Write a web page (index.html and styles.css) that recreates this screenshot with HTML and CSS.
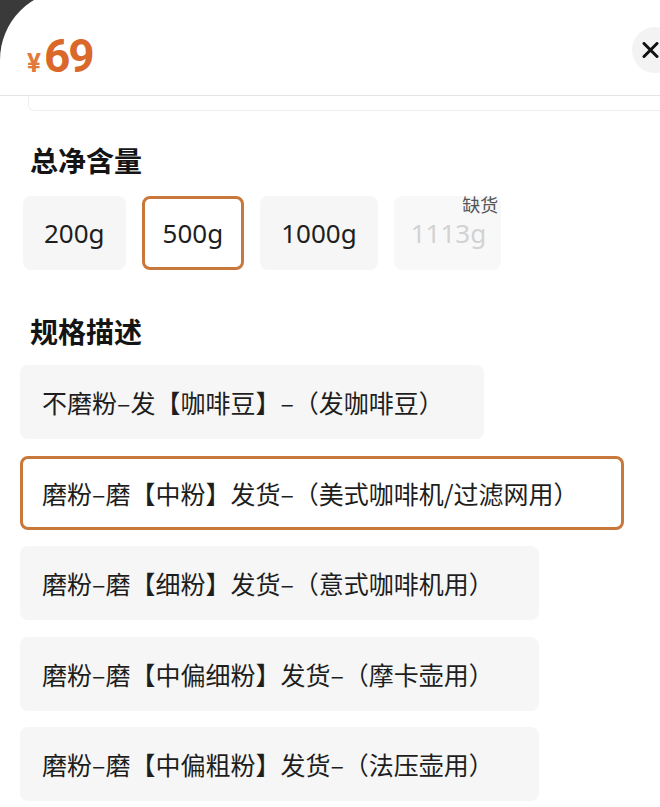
FILE: index.html
```html
<!DOCTYPE html>
<html lang="zh-CN">
<head>
<meta charset="utf-8">
<title>规格选择</title>
<link rel="stylesheet" href="styles.css">
</head>
<body>
<div class="sheet">
  <header class="header">
    <div class="price"><span class="yen">¥</span><span class="amount">69</span></div>
    <button class="close" aria-label="关闭">
      <svg width="17" height="16" viewBox="0 0 17 16"><path d="M2 1.5 L15 14.5 M15 1.5 L2 14.5" stroke="#111" stroke-width="3" stroke-linecap="round" fill="none"/></svg>
    </button>
  </header>
  <div class="peek"></div>
  <section class="group">
    <h2 class="title">总净含量</h2>
    <div class="sizes">
      <div class="size">200g</div>
      <div class="size selected">500g</div>
      <div class="size">1000g</div>
      <div class="size disabled">1113g<span class="badge">缺货</span></div>
    </div>
  </section>
  <section class="group group-spec">
    <h2 class="title">规格描述</h2>
    <div class="specs">
      <div class="spec">不磨粉–发【咖啡豆】–（发咖啡豆）</div>
      <div class="spec selected">磨粉–磨【中粉】发货–（美式咖啡机/过滤网用）</div>
      <div class="spec wide">磨粉–磨【细粉】发货–（意式咖啡机用）</div>
      <div class="spec wide">磨粉–磨【中偏细粉】发货–（摩卡壶用）</div>
      <div class="spec wide">磨粉–磨【中偏粗粉】发货–（法压壶用）</div>
    </div>
  </section>
</div>
</body>
</html>
```
FILE: styles.css
```css
html, body {
  margin: 0;
  padding: 0;
}
body {
  background: #3a3a3a;
  overflow: hidden;
  height: 807px;
  font-family: "Noto Sans", "Noto Sans CJK SC", sans-serif;
  color: #1e1e1e;
}
.sheet {
  background: #ffffff;
  margin-top: -10px;
  border-top-left-radius: 70px;
  height: 830px;
}
.header {
  display: flex;
  justify-content: space-between;
  align-items: flex-start;
  height: 106px;
  box-sizing: border-box;
  padding: 37px 0 0 27px;
  border-bottom: 1.5px solid #e4e4e4;
}
.price {
  display: flex;
  align-items: baseline;
  margin-top: 6px;
  color: #d9682a;
  font-family: Roboto, "Noto Sans", sans-serif;
  font-weight: 700;
  line-height: 46px;
}
.yen {
  font-size: 26px;
  color: #e17a3a;
  margin-right: 3px;
}
.amount {
  font-size: 46px;
  letter-spacing: -2px;
}
.close {
  width: 46px;
  height: 46px;
  margin-right: -18px;
  border: none;
  border-radius: 50%;
  background: #f3f3f3;
  padding: 0 10px 0 0;
  display: flex;
  align-items: center;
  justify-content: center;
}
.close svg {
  display: block;
}
.peek {
  height: 14px;
  margin-left: 28px;
  margin-right: -10px;
  border: 1px solid #eeeeee;
  border-top: none;
  border-bottom-left-radius: 6px;
}
.group {
  padding-left: 20px;
}
.title {
  margin: 29px 0 0 10px;
  font-family: "Noto Sans CJK SC", sans-serif;
  font-size: 28px;
  line-height: 40px;
  font-weight: 700;
  color: #141414;
}
.sizes {
  display: flex;
  gap: 16px;
  margin: 16px 0 0 3px;
}
.size {
  position: relative;
  height: 74px;
  box-sizing: border-box;
  padding: 0 18px;
  border: 3px solid transparent;
  border-radius: 8px;
  background: #f6f6f6;
  display: flex;
  align-items: center;
  font-family: "Noto Sans", sans-serif;
  font-size: 26px;
  color: #1e1e1e;
}
.size.selected {
  background: #ffffff;
  border-color: #c9783b;
}
.size.disabled {
  background: #f8f8f8;
  color: #d2d2d2;
  padding: 0 12px 0 14px;
}
.badge {
  position: absolute;
  top: -7px;
  right: 0px;
  font-family: "Noto Sans CJK SC", sans-serif;
  font-size: 18px;
  line-height: 24px;
  color: #555555;
}
.group-spec .title {
  margin-top: 41px;
}
.specs {
  display: flex;
  flex-direction: column;
  align-items: flex-start;
  gap: 16.5px;
  margin-top: 14px;
}
.spec {
  height: 74px;
  box-sizing: border-box;
  padding: 0 37px 0 19px;
  border: 3px solid transparent;
  border-radius: 8px;
  background: #f6f6f6;
  display: flex;
  align-items: center;
  white-space: nowrap;
  font-family: "Noto Sans CJK SC", sans-serif;
  font-size: 25px;
  color: #1e1e1e;
}
.spec.wide {
  padding-right: 42px;
}
.spec.selected {
  background: #ffffff;
  border-color: #c9783b;
  padding-right: 42px;
}
```
